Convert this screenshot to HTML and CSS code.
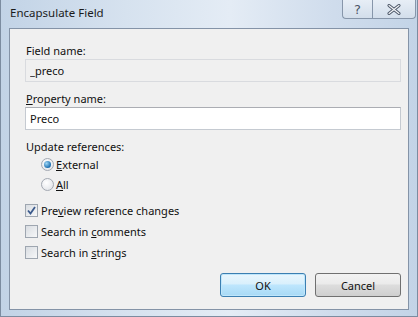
FILE: index.html
```html
<!DOCTYPE html>
<html lang="en">
<head>
  <meta charset="UTF-8" />
  <title>Encapsulate Field</title>
  <link rel="stylesheet" href="styles.css">
</head>
<body>
  <div class="window">
    <div class="titlebar">
      <div class="title">Encapsulate Field</div>
      <div class="caption-buttons">
        <button class="cap-btn help">?</button>
        <button class="cap-btn close">
          <svg width="14" height="11" viewBox="0 0 14 11">
            <path d="M2 1.5 L12 9.5 M12 1.5 L2 9.5" stroke="#4a5566" stroke-width="3" stroke-linecap="round"/>
            <path d="M2 1.5 L12 9.5 M12 1.5 L2 9.5" stroke="#f4f6f9" stroke-width="1.2" stroke-linecap="round"/>
          </svg>
        </button>
      </div>
    </div>

    <div class="client">
      <label class="label">Field name:</label>
      <input class="textbox readonly" type="text" value="_preco" readonly>

      <label class="label"><u>P</u>roperty name:</label>
      <input class="textbox" type="text" value="Preco">

      <div class="label group-label">Update references:</div>
      <div class="radio-list">
        <label class="option"><span class="radio checked"></span><span><u>E</u>xternal</span></label>
        <label class="option"><span class="radio"></span><span><u>A</u>ll</span></label>
      </div>

      <div class="check-list">
        <label class="option"><span class="checkbox checked">
          <svg width="9" height="9" viewBox="0 0 9 9"><path d="M1 4.5 L3.5 7.5 L8 1" fill="none" stroke="#3b5a8c" stroke-width="1.8"/></svg>
        </span><span>Pre<u>v</u>iew reference changes</span></label>
        <label class="option"><span class="checkbox"></span><span>Search in <u>c</u>omments</span></label>
        <label class="option"><span class="checkbox"></span><span>Search in <u>s</u>trings</span></label>
      </div>

      <div class="buttons">
        <button class="btn default">OK</button>
        <button class="btn">Cancel</button>
      </div>
    </div>
  </div>
</body>
</html>
```

FILE: styles.css
```css
* {
  margin: 0;
  padding: 0;
  box-sizing: border-box;
}
body {
  font-family: 'Noto Sans', 'Open Sans', sans-serif;
  font-size: 11px;
  color: #111111;
  background: #ffffff;
}
.window {
  width: 418px;
  height: 317px;
  display: flex;
  flex-direction: column;
  padding: 0 8px 6px 8px;
  background: linear-gradient(90deg, #c2d3e6 0%, #d6e2ef 30%, #e4ecf5 55%, #cfdcec 80%, #c3d4e7 100%);
  border: 1px solid #7c8ca0;
  border-top: none;
}
.titlebar {
  height: 28px;
  display: flex;
  justify-content: space-between;
  align-items: flex-start;
}
.title {
  padding: 5px 0 0 1px;
  font-size: 11.5px;
  color: #1b1b1b;
}
.caption-buttons {
  display: flex;
  margin-right: -7px;
}
.cap-btn {
  height: 19px;
  border: 1px solid #8796aa;
  border-top: none;
  background: linear-gradient(#e7eef6, #d3deeb);
  color: #4a5566;
  display: flex;
  align-items: center;
  justify-content: center;
  font-family: 'DejaVu Sans', sans-serif;
  font-size: 13px;
}
.help {
  width: 30px;
  border-radius: 0 0 0 4px;
  border-right: none;
}
.close {
  width: 44px;
  border-radius: 0 0 4px 0;
}
.client {
  flex: 1;
  background: #f0f0f0;
  border: 1px solid #8493a7;
  padding: 14px 7px 0 15px;
  display: flex;
  flex-direction: column;
}
.label {
  display: block;
  padding-left: 1px;
  line-height: 15px;
  margin-bottom: 1px;
}
.textbox {
  height: 23px;
  border: 1px solid #c5cad1;
  border-top-color: #abadb3;
  padding: 0 4px;
  font-family: inherit;
  font-size: 11px;
  color: #111111;
  background: #ffffff;
  margin-bottom: 9px;
  outline: none;
}
.textbox.readonly {
  background: #f0f0f0;
  border-color: #d9dbdf;
}
.group-label {
  margin-bottom: 2px;
}
.radio-list {
  display: flex;
  flex-direction: column;
  gap: 4px;
  padding-left: 16px;
}
.option {
  display: flex;
  align-items: center;
  gap: 2px;
  height: 16px;
}
.radio {
  width: 13px;
  height: 13px;
  border-radius: 50%;
  border: 1px solid #a3a9b2;
  background: radial-gradient(circle at 40% 35%, #ffffff, #dcdfe4);
  display: flex;
  align-items: center;
  justify-content: center;
}
.radio.checked::after {
  content: '';
  width: 7px;
  height: 7px;
  border-radius: 50%;
  background: radial-gradient(circle at 35% 35%, #9fd7f5, #1d6fb0 70%, #0f4e86);
}
.check-list {
  display: flex;
  flex-direction: column;
  gap: 5px;
  margin-top: 10px;
}
.check-list .option {
  gap: 3px;
}
.checkbox {
  width: 13px;
  height: 13px;
  border: 1px solid #9ea6b0;
  background: linear-gradient(135deg, #d9dde2, #f6f7f8);
  display: flex;
  align-items: center;
  justify-content: center;
}
.buttons {
  display: flex;
  justify-content: flex-end;
  gap: 9px;
  margin-top: 13px;
}
.btn {
  width: 86px;
  height: 24px;
  border: 1px solid #707070;
  border-radius: 3px;
  background: linear-gradient(#f2f2f2 0%, #ebebeb 45%, #dddddd 50%, #cfcfcf 100%);
  font-family: inherit;
  font-size: 11px;
  color: #111111;
}
.btn.default {
  border-color: #3c7fb1;
  background: linear-gradient(#eaf6fd 0%, #d9f0fc 45%, #bee6fd 50%, #a7d9f5 100%);
  box-shadow: inset 0 0 0 1px #bfe6fb;
}
```
